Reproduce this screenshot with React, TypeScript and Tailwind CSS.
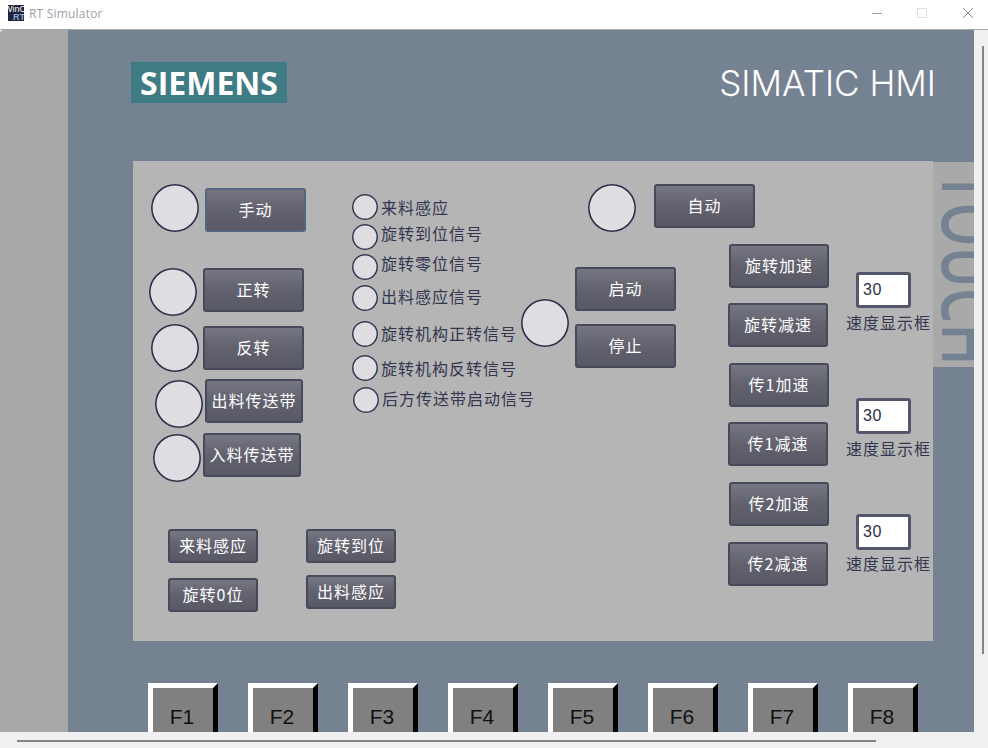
import React from "react";

const cjk = "font-['Noto_Sans_CJK_SC','Noto_Sans',sans-serif]";

function Circle({ className = "" }: { className?: string }) {
  return <div className={`size-12 shrink-0 rounded-full bg-[#dfdde1] shadow-[inset_0_0_0_1.6px_#2c2e48] ${className}`} />;
}

function Btn({ className = "", children, tall = true, blue = false }: { className?: string; children: React.ReactNode; tall?: boolean; blue?: boolean }) {
  return (
    <div
      className={`flex shrink-0 items-center justify-center rounded-[3px] border-2 bg-gradient-to-b from-[#777783] via-[#62626f] to-[#595966] pb-[2px] text-[16px] tracking-[1px] text-white ${tall ? "h-[44px]" : "h-[34px] w-[90px]"} ${blue ? "border-[#56667e]" : "border-[#464a5a]"} ${cjk} ${className}`}
    >
      {children}
    </div>
  );
}

function Signal({ className = "", labelClass = "", children }: { className?: string; labelClass?: string; children: React.ReactNode }) {
  return (
    <div className={`flex h-[26px] items-center gap-[3px] ${className}`}>
      <div className="size-[26px] shrink-0 rounded-full bg-[#dfdde1] shadow-[inset_0_0_0_1.5px_#35374f]" />
      <div className={`whitespace-nowrap text-[16px] leading-6 tracking-[1px] text-[#34364f] ${cjk} ${labelClass}`}>{children}</div>
    </div>
  );
}

function Speed({ className = "", labelClass = "" }: { className?: string; labelClass?: string }) {
  return (
    <div className={`flex flex-col items-start ${className}`}>
      <div className="ml-[10px] flex h-9 w-[55px] items-center rounded-[3px] border-[3px] border-[#54576b] bg-white pl-[4px] font-['Liberation_Sans',sans-serif] text-[16px] tracking-[0.5px] text-[#2c2e48]">
        30
      </div>
      <div className={`whitespace-nowrap text-[16px] leading-6 tracking-[1px] text-[#34364f] ${cjk} ${labelClass}`}>速度显示框</div>
    </div>
  );
}

function FKey({ label }: { label: string }) {
  return (
    <div className="h-[60px] w-[70px] shrink-0 border-l-[5px] border-r-[5px] border-t-[5px] border-l-white border-r-black border-t-white bg-[#808080]">
      <div className="pr-[2px] pt-[17px] text-center font-['Liberation_Sans',sans-serif] text-[21px] leading-[23px] text-[#111]">{label}</div>
    </div>
  );
}

export default function App() {
  return (
    <div className="flex h-[748px] w-[988px] flex-col overflow-hidden bg-[#f0f0f0]">
      {/* title bar */}
      <div className="flex h-[29px] shrink-0 items-start bg-white pl-[8px] pt-[5px]">
        <div className="h-4 w-4 overflow-hidden bg-[#1f2438] font-['Liberation_Sans',sans-serif] text-[9px] leading-[8px] text-white">
          <div className="-ml-[4px] whitespace-nowrap">WinC</div>
          <div className="pl-[5px] font-bold text-[#9aa6e0]">RT</div>
        </div>
        <div className="ml-[5px] font-['Open_Sans',sans-serif] text-[12px] leading-[18px] tracking-[0.2px] text-[#a0a0a8]">RT Simulator</div>
        <div className="ml-auto flex items-start pt-[3px]">
          <svg width="10" height="10" viewBox="0 0 10 10" className="mr-[35px]">
            <path d="M0 5.5H10" stroke="#9a9a9a" strokeWidth="1" />
          </svg>
          <svg width="10" height="10" viewBox="0 0 10 10" className="mr-[36px]">
            <rect x="0.5" y="0.5" width="9" height="9" fill="none" stroke="#e0e0e0" strokeWidth="1" />
          </svg>
          <svg width="10" height="10" viewBox="0 0 10 10" className="mr-[15px]">
            <path d="M0 0L10 10M10 0L0 10" stroke="#8a8a8a" strokeWidth="1" />
          </svg>
        </div>
      </div>
      <div className="h-px shrink-0 bg-[#a9a9a9]" />

      {/* body */}
      <div className="flex h-[702px] shrink-0">
        <div className="flex w-[974px] shrink-0 overflow-hidden rounded-tl-[4px]">
          <div className="w-[68px] shrink-0 bg-[#a7a8aa]" />
          <div className="flex w-[906px] shrink-0 flex-col bg-[#748291]">
            {/* header */}
            <div className="flex h-[131px] shrink-0 items-start justify-between pl-[63px] pr-[38px]">
              <div className="mt-[32px] flex h-[41px] w-[156px] items-center justify-center bg-[#3f7b83] font-['Open_Sans',sans-serif] text-[32px] font-bold text-white">
                SIEMENS
              </div>
              <div className="mt-[31px] font-['Inter',sans-serif] text-[35px] font-light leading-[44px] text-white">
                SIMATIC HMI
              </div>
            </div>

            {/* panel row */}
            <div className="flex h-[480px] shrink-0 items-start pl-[65px]">
              <div className="relative h-[480px] w-[800px] shrink-0 bg-[#b5b5b5]">
                {/* manual controls */}
                <div className="absolute left-[16px] top-[23px] flex flex-col">
                  <div className="ml-[2px] flex items-start gap-[6px]">
                    <Circle />
                    <Btn blue className="mt-[4px] w-[101px]">手动</Btn>
                  </div>
                  <div className="mt-[36px] flex items-start gap-[6px]">
                    <Circle />
                    <Btn className="w-[101px]">正转</Btn>
                  </div>
                  <div className="ml-[2px] mt-[8px] flex items-start gap-[4px]">
                    <Circle />
                    <Btn className="mt-[2px] w-[101px]">反转</Btn>
                  </div>
                  <div className="ml-[6px] mt-[7px] flex items-start gap-[2px]">
                    <Circle className="mt-px" />
                    <Btn className="w-[98px]">出料传送带</Btn>
                  </div>
                  <div className="ml-[4px] mt-[5px] flex items-start gap-[2px]">
                    <Circle className="mt-px" />
                    <Btn className="w-[98px]">入料传送带</Btn>
                  </div>
                </div>

                {/* signal list */}
                <div className="absolute left-[219px] top-[33px] flex flex-col">
                  <Signal>来料感应</Signal>
                  <Signal className="mt-[4px]" labelClass="mb-[8px]">旋转到位信号</Signal>
                  <Signal className="mt-[4px]" labelClass="mb-[8px]">旋转零位信号</Signal>
                  <Signal className="mt-[5px]" labelClass="mb-[4px]">出料感应信号</Signal>
                  <Signal className="mt-[10px]" labelClass="mb-[2px]">旋转机构正转信号</Signal>
                  <Signal className="mt-[8px]">旋转机构反转信号</Signal>
                  <Signal className="ml-px mt-[6px]" labelClass="mb-[4px]">后方传送带启动信号</Signal>
                </div>

                {/* auto */}
                <div className="absolute left-[455px] top-[23px] flex items-start gap-[18px]">
                  <Circle />
                  <Btn className="w-[101px]">自动</Btn>
                </div>

                {/* start / stop */}
                <div className="absolute left-[388px] top-[106px] flex items-start gap-[6px]">
                  <Circle className="mt-[32px]" />
                  <div className="flex flex-col gap-[13px]">
                    <Btn className="w-[101px]">启动</Btn>
                    <Btn className="w-[101px]">停止</Btn>
                  </div>
                </div>

                {/* speed buttons */}
                <div className="absolute left-[595px] top-[83px] flex flex-col gap-[15px]">
                  <Btn className="ml-px w-[100px]">旋转加速</Btn>
                  <Btn className="w-[100px]">旋转减速</Btn>
                  <Btn className="ml-px mt-px w-[100px]">传1加速</Btn>
                  <Btn className="w-[100px]">传1减速</Btn>
                  <Btn className="ml-px mt-px w-[100px]">传2加速</Btn>
                  <Btn className="mt-px w-[100px]">传2减速</Btn>
                </div>

                {/* speed displays */}
                <div className="absolute left-[713px] top-[111px] flex flex-col">
                  <Speed labelClass="mt-[2px]" />
                  <Speed className="mt-[64px]" labelClass="mt-[2px]" />
                  <Speed className="mt-[54px]" labelClass="mt-px" />
                </div>

                {/* sensor buttons */}
                <div className="absolute left-[35px] top-[368px] flex gap-[48px]">
                  <div className="flex flex-col gap-[15px]">
                    <Btn tall={false}>来料感应</Btn>
                    <Btn tall={false}>旋转0位</Btn>
                  </div>
                  <div className="flex flex-col gap-[12px]">
                    <Btn tall={false}>旋转到位</Btn>
                    <Btn tall={false}>出料感应</Btn>
                  </div>
                </div>
              </div>

              {/* touch strip */}
              <div className="mt-px h-[205px] w-[41px] shrink-0 overflow-hidden bg-[#a9a9a9] pt-[9px]">
                <div className="origin-top scale-y-[0.735] whitespace-nowrap font-['Open_Sans',sans-serif] text-[76px] font-semibold leading-none text-[#748291] [writing-mode:vertical-lr]">
                  TOUCH
                </div>
              </div>
            </div>

            {/* function keys */}
            <div className="mt-[42px] flex gap-[30px] pl-[80px]">
              {["F1", "F2", "F3", "F4", "F5", "F6", "F7", "F8"].map((k) => (
                <FKey key={k} label={k} />
              ))}
            </div>
          </div>
        </div>
        {/* vertical scrollbar */}
        <div className="w-[14px] shrink-0 pl-[8px] pt-[16px]">
          <div className="h-[608px] w-[2px] bg-[#858585]" />
        </div>
      </div>

      {/* horizontal scrollbar */}
      <div className="shrink-0 pl-[17px] pt-[8px]">
        <div className="h-[2px] w-[859px] bg-[#858585]" />
      </div>
    </div>
  );
}
